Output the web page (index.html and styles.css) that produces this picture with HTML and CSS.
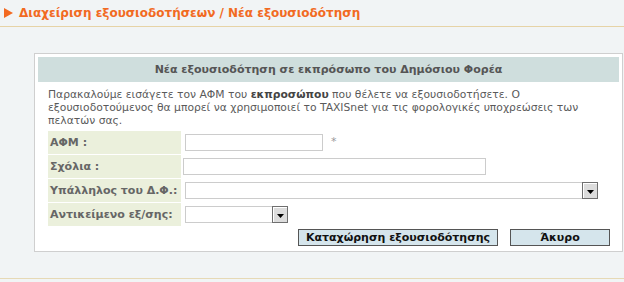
FILE: index.html
```html
<!DOCTYPE html>
<html lang="el">
<head>
<meta charset="utf-8">
<title>Νέα εξουσιοδότηση</title>
<link rel="stylesheet" href="styles.css">
</head>
<body>
<div class="header">
  <svg class="arrow-icon" width="9" height="10" viewBox="0 0 9 10"><path d="M0 0 L9 5 L0 10 Z" fill="#f26a22"/></svg>
  <h1 class="title">Διαχείριση εξουσιοδοτήσεων / Νέα εξουσιοδότηση</h1>
</div>
<div class="panel">
  <div class="panel-title">Νέα εξουσιοδότηση σε εκπρόσωπο του Δημόσιου Φορέα</div>
  <p class="intro">Παρακαλούμε εισάγετε τον ΑΦΜ του <b>εκπροσώπου</b> που θέλετε να εξουσιοδοτήσετε. Ο<br>εξουσιοδοτούμενος θα μπορεί να χρησιμοποιεί το TAXISnet για τις φορολογικές υποχρεώσεις των<br>πελατών σας.</p>
  <div class="form">
    <div class="label">ΑΦΜ :</div>
    <div class="field"><span class="input afm"></span><span class="req">*</span></div>
    <div class="label">Σχόλια :</div>
    <div class="field"><span class="input comments"></span></div>
    <div class="label">Υπάλληλος του Δ.Φ.:</div>
    <div class="field"><span class="select employee"><span class="drop"><svg width="7" height="4" viewBox="0 0 7 4"><path d="M0 0 H7 L3.5 4 Z" fill="#000"/></svg></span></span></div>
    <div class="label">Αντικείμενο εξ/σης:</div>
    <div class="field"><span class="select subject"><span class="drop"><svg width="7" height="4" viewBox="0 0 7 4"><path d="M0 0 H7 L3.5 4 Z" fill="#000"/></svg></span></span></div>
  </div>
  <div class="actions">
    <button class="btn submit">Καταχώρηση εξουσιοδότησης</button>
    <button class="btn cancel">Άκυρο</button>
  </div>
</div>
<div class="footer"></div>
</body>
</html>
```
FILE: styles.css
```css
html, body {
  margin: 0;
  padding: 0;
}
body {
  background: #f1f4f5;
  font-family: "DejaVu Sans", Verdana, sans-serif;
  font-size: 11px;
  color: #555;
  width: 624px;
  height: 282px;
  overflow: hidden;
}
.header {
  border-bottom: 1px solid #e6d3a6;
  display: flex;
  align-items: center;
  padding-left: 4px;
  box-sizing: border-box;
  height: 27px;
}
.arrow-icon {
  display: block;
}
.title {
  margin: 0 0 0 6px;
  font-size: 12px;
  font-weight: bold;
  color: #f26a22;
  line-height: 16px;
}
.panel {
  margin: 26px 0 0 34px;
  width: 589px;
  box-sizing: border-box;
  background: #fff;
  border: 1px solid #cfcfcf;
  padding: 3px 3px 5px 3px;
}
.panel-title {
  height: 25px;
  background: #cfdedd;
  color: #555;
  font-weight: bold;
  text-align: center;
  line-height: 25px;
}
.intro {
  margin: 6px 0 0 10px;
  line-height: 13px;
  font-size: 10.75px;
  color: #5a5a5a;
}
.intro b {
  color: #444;
}
.form {
  margin: 4px 0 0 10px;
  display: grid;
  grid-template-columns: 133px 1fr;
  grid-auto-rows: 23px;
  row-gap: 1px;
}
.label {
  background: #ebf0dc;
  font-weight: bold;
  color: #666;
  padding-left: 2px;
  display: flex;
  align-items: center;
}
.field {
  display: flex;
  align-items: center;
}
.input, .select {
  display: block;
  height: 17px;
  box-sizing: border-box;
  border: 1px solid #cccccc;
  background: #fff;
}
.input.afm {
  width: 138px;
  margin-left: 4px;
}
.req {
  margin-left: 8px;
  color: #999;
  margin-top: -2px;
}
.input.comments {
  width: 303px;
  margin-left: 2px;
}
.select {
  margin-left: 4px;
  display: flex;
  justify-content: flex-end;
  align-items: stretch;
}
.select.employee {
  width: 413px;
}
.select.subject {
  width: 103px;
}
.drop {
  width: 16px;
  box-sizing: border-box;
  border: 1px solid #6f6f6f;
  box-shadow: inset 1px 1px 0 #fff;
  background: #dcdcdc;
  margin: -1px -1px -1px 0;
  display: flex;
  align-items: center;
  justify-content: center;
  padding-top: 2px;
}
.drop svg {
  display: block;
}
.actions {
  display: flex;
  justify-content: flex-end;
  gap: 12px;
  margin: 3px 9px 0 0;
}
.btn {
  font-family: "DejaVu Sans", Verdana, sans-serif;
  font-size: 11px;
  font-weight: bold;
  color: #111;
  background: #d5e5ec;
  border: 1px solid #555;
  height: 17px;
  padding: 0;
  line-height: 14px;
}
.btn.submit {
  width: 200px;
}
.btn.cancel {
  width: 100px;
}
.footer {
  margin-top: 26px;
  border-top: 1px solid #e6d9b5;
}
```
